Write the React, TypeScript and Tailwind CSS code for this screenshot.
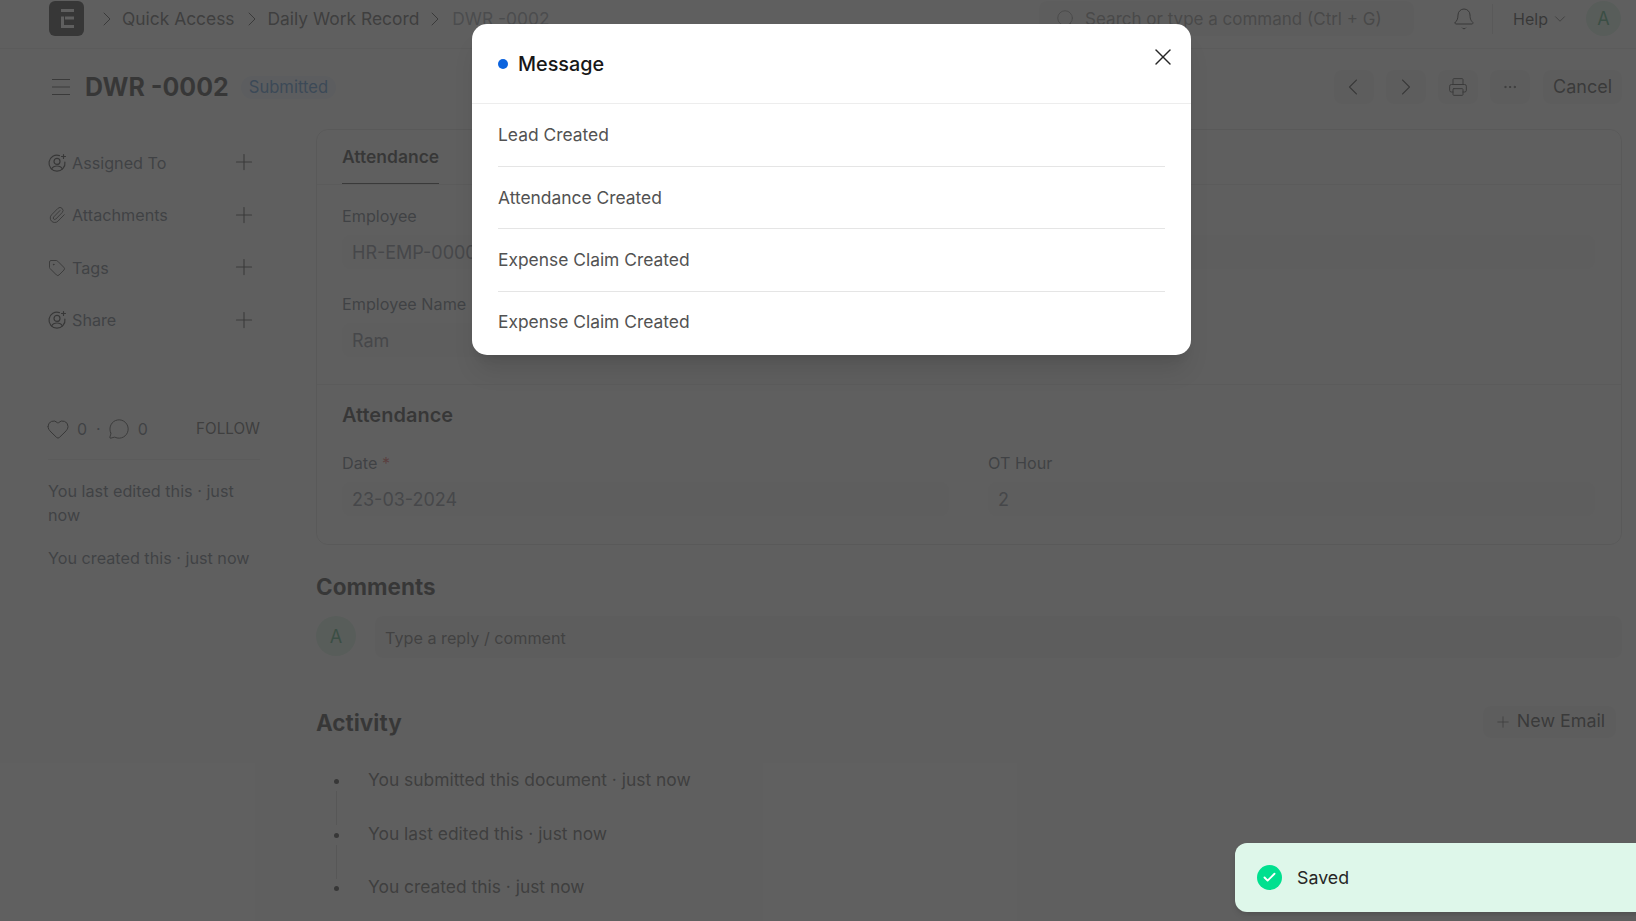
import { Bell, ChevronDown, ChevronLeft, ChevronRight, Heart, MessageCircle, Paperclip, Plus, Printer, Search, Tag, X, Check, Ellipsis } from "lucide-react"

const font = "font-['Inter',sans-serif]"

function UserAdd() {
  return (
    <svg width="20" height="20" viewBox="0 0 20 20" fill="none" stroke="currentColor" strokeWidth="1.2" strokeLinecap="round">
      <path d="M12.5 2.6A8 8 0 1 0 17.9 9" />
      <circle cx="10" cy="8.4" r="3" />
      <path d="M4.6 16c1-2 3-3 5.4-3s4.4 1 5.4 3" />
      <path d="M16.5 1.5v4M14.5 3.5h4" />
    </svg>
  )
}

function SideRow({ icon, label }: { icon: React.ReactNode; label: string }) {
  return (
    <div className="flex h-[26px] items-center justify-between mb-[26.5px] w-[210px]">
      <div className="flex items-center gap-[5px] text-[16.2px] text-[#4b5563]">
        <span className="w-[20px] flex justify-center text-[#171717]">{icon}</span>
        <span>{label}</span>
      </div>
      <Plus size={26} strokeWidth={1} className="text-[#262626] -mt-[2px]" />
    </div>
  )
}

function Field({ label, value, required, className }: { label: string; value: string; required?: boolean; className?: string }) {
  return (
    <div className={className}>
      <div className="text-[16.2px] leading-[20px] text-[#4b5563] mb-[9px]">
        {label} {required && <span className="text-[#e24c4c]">*</span>}
      </div>
      <div className="h-[34px] rounded-lg bg-[#f7f7f7] px-[10px] pt-px flex items-center text-[18px] text-[#6b7280]">{value}</div>
    </div>
  )
}

function IconBtn({ children }: { children: React.ReactNode }) {
  return <div className="w-[40px] h-[34px] rounded-lg bg-[#f3f3f3] flex items-center justify-center text-[#262626]">{children}</div>
}

function Crumb() {
  return <ChevronRight size={24} strokeWidth={1} className="text-[#262626]" />
}

function Activity({ text, last }: { text: string; last?: boolean }) {
  return (
    <div className="flex h-[53.5px]">
      <div className="w-[40px] flex flex-col items-center pt-[5px]">
        <span className="w-[5px] h-[5px] rounded-full bg-[#171717] mt-[2px]" />
        {!last && <span className="w-px h-[34px] bg-[#cfcfcf] mt-[7px]" />}
      </div>
      <div className="text-[17.4px] leading-[16px] text-[#404040] ml-[12px]">{text}</div>
    </div>
  )
}

export default function App() {
  return (
    <div className={`${font} relative h-[921px] w-[1636px] overflow-hidden bg-white`}>
      {/* page under the backdrop */}
      <header className="h-[49px] border-b border-[#e5e5e5] flex items-start pl-[49px] pr-[15px] pt-px">
        <div className="w-[35px] h-[35px] rounded-md bg-[#171717] flex items-center justify-center">
          <svg width="14" height="19" viewBox="0 0 14 19" fill="none">
            <path d="M1 0h13v3H1zM5 7.5h9v3H5zM1 7.5h3V19H1zM4 16h10v3H4z" fill="#fff" />
          </svg>
        </div>
        <nav className="flex items-center h-[35px] pt-px text-[17.4px] text-[#404040] ml-[11px]">
          <Crumb />
          <span className="ml-[3px]">Quick Access</span>
          <span className="ml-[5px]"><Crumb /></span>
          <span className="ml-[4px]">Daily Work Record</span>
          <span className="ml-[4px]"><Crumb /></span>
          <span className="ml-[5px] text-[#8a8f98]">DWR -0002</span>
        </nav>
        <div className="ml-auto flex items-center h-[35px]">
          <div className="w-[375px] h-[35px] rounded-lg bg-[#f3f3f3] flex items-center pl-[16px] gap-[8px] text-[17px] text-[#7c7c7c]">
            <Search size={22} strokeWidth={1} />
            <span className="pt-[2px]">Search or type a command (Ctrl + G)</span>
          </div>
          <Bell size={24} strokeWidth={1} className="ml-[38px] text-[#171717]" />
          <span className="w-px h-[30px] bg-[#dcdcdc] ml-[16px]" />
          <span className="ml-[20px] text-[16px] text-[#171717]">Help</span>
          <ChevronDown size={18} strokeWidth={1} className="ml-[3px] text-[#171717]" />
          <div className="ml-[17px] w-[35px] h-[35px] rounded-full bg-[#d4f0df] text-[#2a9d63] text-[18px] flex items-center justify-center">A</div>
        </div>
      </header>

      <div className="flex items-center h-[34px] mt-[21px] pl-[52px] pr-[14px]">
        <svg width="18" height="16" viewBox="0 0 18 16" stroke="#262626" strokeWidth="1">
          <path d="M0 .5h18M0 8h18M0 15.5h18" />
        </svg>
        <h1 className="ml-[15px] pt-[1px] text-[25px] font-bold text-[#171717]">DWR -0002</h1>
        <span className="ml-[12px] h-[23px] px-[8px] rounded-full bg-[#eaf2fb] text-[#2f7fd0] text-[16.6px] flex items-center">Submitted</span>
        <div className="ml-auto flex items-center gap-[12px]">
          <IconBtn><ChevronLeft size={28} strokeWidth={1} className="-ml-[2px]" /></IconBtn>
          <IconBtn><ChevronRight size={28} strokeWidth={1} className="-ml-[1px]" /></IconBtn>
          <IconBtn><Printer size={20} strokeWidth={1.2} /></IconBtn>
          <IconBtn><Ellipsis size={16} strokeWidth={1.5} /></IconBtn>
          <div className="h-[34px] w-[79px] ml-[1px] pb-px rounded-lg bg-[#f3f3f3] flex items-center justify-center text-[18px] text-[#262626]">Cancel</div>
        </div>
      </div>

      <div className="flex pl-[47px] pr-[14px] mt-[26px]">
        <aside className="w-[269px] shrink-0 pt-[20px]">
          <SideRow icon={<UserAdd />} label="Assigned To" />
          <SideRow icon={<Paperclip size={18} strokeWidth={1.2} />} label="Attachments" />
          <SideRow icon={<Tag size={18} strokeWidth={1.2} />} label="Tags" />
          <SideRow icon={<UserAdd />} label="Share" />
          <div className="w-[212px] mt-[82px] ml-[1px]">
            <div className="flex items-center h-[26px] text-[16px] text-[#4b5563]">
              <Heart size={24} strokeWidth={1} className="text-[#171717] -ml-[2px]" />
              <span className="ml-[7px]">0</span>
              <span className="ml-[9px]">·</span>
              <MessageCircle size={22} strokeWidth={1} className="ml-[7px] text-[#171717]" />
              <span className="ml-[8px]">0</span>
              <span className="ml-auto pt-px text-[15.2px] text-[#404040]">FOLLOW</span>
            </div>
            <div className="border-t border-[#e5e5e5] mt-[17px] pt-[19px] text-[16.2px] leading-[24px] text-[#4b5563]">
              <p>You last edited this · just now</p>
              <p className="mt-[19px]">You created this · just now</p>
            </div>
          </div>
        </aside>

        <main className="flex-1 min-w-0 -mt-px">
          <div className="h-[416px] rounded-xl border border-[#dcdcdc]">
            <div className="h-[55px] border-b border-[#e5e5e5] px-[25px]">
              <div className="inline-flex h-[54px] pt-px items-center border-b border-[#262626] text-[17.5px] font-semibold text-[#171717]">Attendance</div>
            </div>
            <div className="h-[200px] border-b border-[#e5e5e5] px-[25px] pt-[21px]">
              <div className="grid grid-cols-2 gap-[39px] pr-[1px]">
                <Field label="Employee" value="HR-EMP-00001" />
                <Field label="Company" value="" />
              </div>
              <Field label="Employee Name" value="Ram" className="mt-[25px] w-[607px]" />
            </div>
            <div className="px-[25px] pt-[16px]">
              <h3 className="text-[20px] leading-[28px] font-semibold text-[#171717]">Attendance</h3>
              <div className="grid grid-cols-2 gap-[39px] mt-[24px] pr-[1px]">
                <Field label="Date" value="23-03-2024" required />
                <Field label="OT Hour" value="2" />
              </div>
            </div>
          </div>

          <h2 className="mt-[28px] text-[22.5px] leading-[28px] font-bold text-[#171717]">Comments</h2>
          <div className="flex mt-[15px] gap-[19px]">
            <div className="w-[40px] h-[40px] rounded-full bg-[#d4f0df] text-[#2a9d63] text-[18px] flex items-center justify-center">A</div>
            <div className="flex-1 h-[42px] rounded-lg bg-[#f3f3f3] px-[10px] pt-[3px] flex items-center text-[16.2px] text-[#525252]">Type a reply / comment</div>
          </div>

          <div className="flex items-center justify-between mt-[48px] pr-[6px]">
            <h2 className="text-[22.5px] font-bold text-[#171717]">Activity</h2>
            <div className="h-[32px] w-[133px] -mt-[2px] rounded-lg bg-[#f3f3f3] flex items-center justify-center gap-[5px] text-[17.9px] text-[#262626]">
              <Plus size={18} strokeWidth={1} />New Email
            </div>
          </div>
          <div className="mt-[32px]">
            <Activity text="You submitted this document · just now" />
            <div className="pt-px -mb-px"><Activity text="You last edited this · just now" /></div>
            <Activity text="You created this · just now" last />
          </div>
        </main>
      </div>

      {/* backdrop */}
      <div className="absolute inset-0 bg-[#3f3f3f]/[0.83]" />

      {/* message dialog */}
      <div className="absolute left-[472px] top-[24px] w-[719px] h-[331px] rounded-[15px] bg-white shadow-xl">
        <div className="h-[80px] border-b border-[#ededed] flex items-center pl-[26px]">
          <span className="w-[10px] h-[10px] rounded-full bg-[#0b63de]" />
          <span className="ml-[10px] pt-[2px] text-[19.8px] font-medium text-[#171717]">Message</span>
          <X size={28} strokeWidth={1.2} className="absolute right-[14px] top-[19px] text-[#262626]" />
        </div>
        <div className="px-[26px] text-[17.4px] text-[#525252]">
          <div className="h-[63px] border-b border-[#e5e5e5] flex items-center">Lead Created</div>
          <div className="h-[62px] pt-px border-b border-[#e5e5e5] flex items-center">Attendance Created</div>
          <div className="h-[63px] border-b border-[#e5e5e5] flex items-center">Expense Claim Created</div>
          <div className="h-[60px] flex items-center">Expense Claim Created</div>
        </div>
      </div>

      {/* toast */}
      <div className="absolute left-[1235px] top-[843px] w-[440px] h-[69px] rounded-xl bg-[#def7ea] shadow-md flex items-center pl-[22px]">
        <span className="w-[25px] h-[25px] rounded-full bg-[#00e08f] flex items-center justify-center">
          <Check size={15} strokeWidth={3} className="text-white" />
        </span>
        <span className="ml-[15px] pt-[2px] text-[17.8px] text-[#262626]">Saved</span>
      </div>
    </div>
  )
}
